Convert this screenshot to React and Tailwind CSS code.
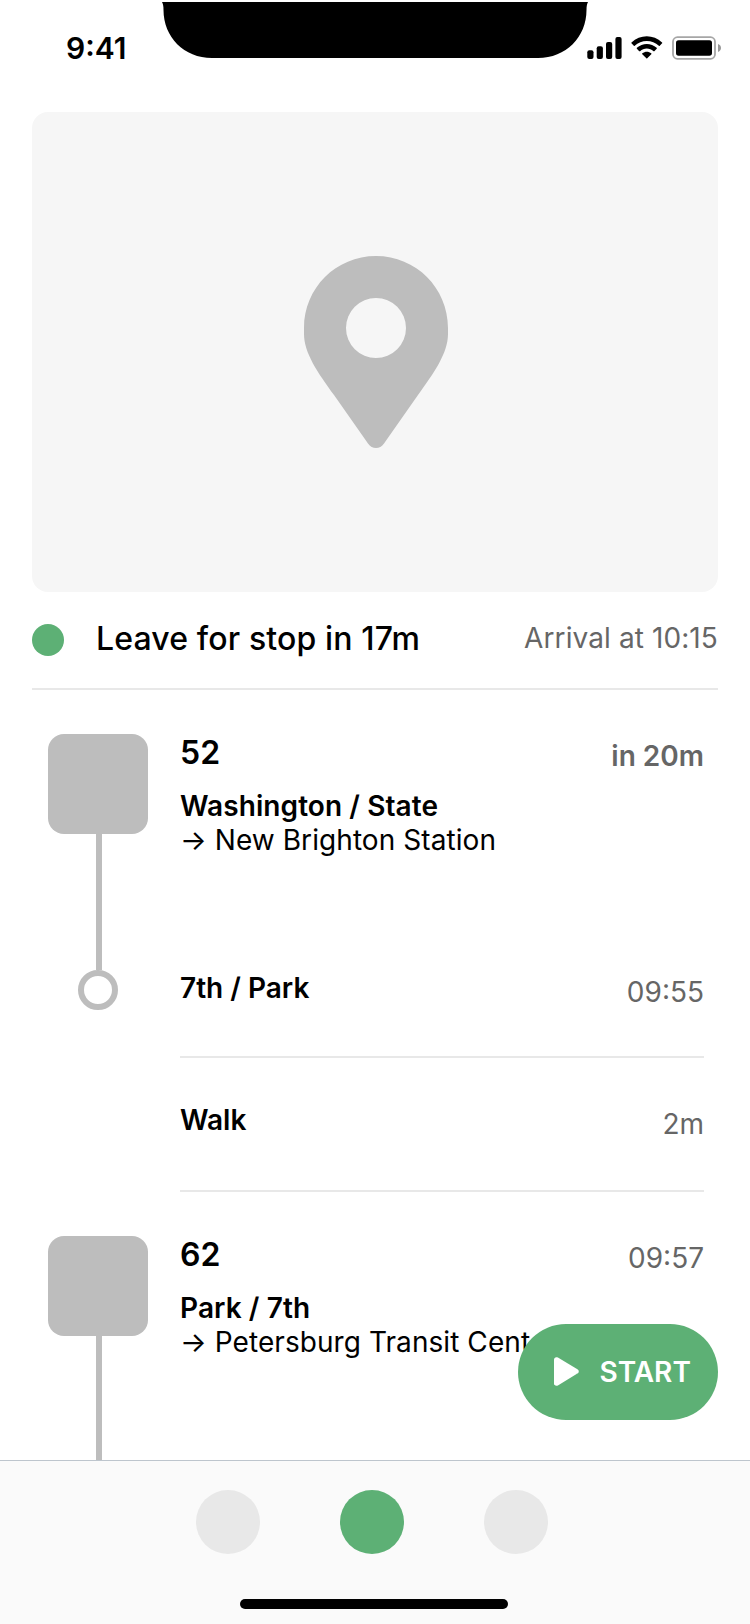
import React from "react";

function StatusBar() {
  return (
    <header className="flex h-28 items-start pt-0.5">
      <div className="mt-7 ml-[66px] w-24 shrink-0 text-[30px] leading-9 font-semibold">9:41</div>
      <div className="h-14 w-[426px] shrink-0">
        <svg className="block" width="426" height="56" viewBox="0 0 426 56">
          <path d="M0 0H426C425 2 424.5 4 424.5 8C424.5 35 404 56 376 56H50C22 56 1.500 35 1.500 8C1.500 4 1 2 0 0Z" />
        </svg>
      </div>
      <svg className="mt-[34px] -ml-px shrink-0" width="134" height="24" viewBox="0 0 134 24">
        <rect x="0.300" y="14.300" width="6.200" height="8.700" rx="2" />
        <rect x="9.700" y="10.300" width="6.200" height="12.700" rx="2" />
        <rect x="19" y="6" width="6.200" height="17" rx="2" />
        <rect x="28.400" y="1" width="6.200" height="22" rx="2" />
        <g transform="translate(44.300 0.300) scale(2.020)">
          <path d="M7.667 2.281C9.893 2.281 12.033 3.136 13.645 4.67C13.767 4.788 13.961 4.786 14.081 4.666L15.241 3.495C15.302 3.434 15.336 3.351 15.335 3.265C15.335 3.179 15.3 3.097 15.238 3.037C11.006 -1.012 4.326 -1.012 0.094 3.037C0.033 3.097 -0.002 3.179 -0.002 3.265C-0.003 3.351 0.031 3.434 0.092 3.495L1.252 4.666C1.371 4.786 1.566 4.788 1.688 4.67C3.3 3.136 5.44 2.281 7.667 2.281Z" />
          <path d="M7.667 6.09C8.89 6.09 10.07 6.544 10.977 7.365C11.1 7.482 11.293 7.479 11.413 7.359L12.571 6.189C12.632 6.127 12.666 6.044 12.665 5.957C12.664 5.871 12.629 5.788 12.567 5.728C9.805 3.16 5.53 3.16 2.769 5.728C2.706 5.788 2.671 5.871 2.67 5.957C2.669 6.044 2.703 6.127 2.765 6.189L3.922 7.359C4.042 7.479 4.235 7.482 4.358 7.365C5.264 6.545 6.443 6.09 7.667 6.09Z" />
          <path d="M9.985 8.652C9.987 8.739 9.953 8.823 9.89 8.883L7.889 10.903C7.83 10.962 7.75 10.996 7.667 10.996C7.583 10.996 7.503 10.962 7.444 10.903L5.442 8.883C5.38 8.823 5.346 8.739 5.348 8.652C5.35 8.565 5.388 8.483 5.453 8.425C6.731 7.343 8.602 7.343 9.88 8.425C9.945 8.483 9.983 8.565 9.985 8.652Z" />
        </g>
        <rect x="86" y="1.200" width="42" height="21.600" rx="4.500" fill="none" stroke="#a6a6a6" strokeWidth="1.800" />
        <rect x="89" y="4.300" width="36" height="15.400" rx="2.600" />
        <path d="M131 8C133 8.800 134 10.200 134 12C134 13.800 133 15.200 131 16Z" fill="#999" />
      </svg>
    </header>
  );
}

function MapPreview() {
  return (
    <div className="mx-8 flex h-[480px] justify-center rounded-2xl bg-[#f6f6f6] pt-36 pl-0.5">
      <svg width="144" height="192" viewBox="0 0 144 192">
        <path
          fill="#bdbdbd"
          fillRule="evenodd"
          d="M72 0C112 0 144 32 144 72V78C144 97 130 117 114 139L80 187.500C76 193.500 68 193.500 64 187.500L30 139C14 117 0 97 0 78V72C0 32 32 0 72 0ZM72 42A30 30 0 1 0 72 102A30 30 0 1 0 72 42Z"
        />
      </svg>
    </div>
  );
}

function Leg({ route, stop, destination, time, timeClass }) {
  return (
    <div className="flex h-[280px] pt-11">
      <div className="flex w-[100px] shrink-0 flex-col">
        <div className="h-[100px] rounded-2xl bg-[#bdbdbd]" />
        <div className="ml-12 w-1.5 grow bg-[#bdbdbd]" />
      </div>
      <div className="-mt-px ml-8 flex grow items-start justify-between">
        <div className="whitespace-nowrap">
          <div className="text-[32px] leading-[39px] font-semibold">{route}</div>
          <div className="mt-[17px] leading-[34px] font-semibold tracking-[0.08px]">{stop}</div>
          <div className="leading-[34px] tracking-[0.07px]">→ {destination}</div>
        </div>
        <div className={timeClass}>{time}</div>
      </div>
    </div>
  );
}

export default function App() {
  return (
    <div className="relative flex h-[1624px] w-[750px] flex-col overflow-hidden bg-white font-['Inter',sans-serif] text-[28px] leading-[34px] text-black">
      <StatusBar />
      <MapPreview />
      <div className="mx-8 flex h-[98px] shrink-0 items-start border-b-2 border-[#e8e8e8]">
        <div className="mt-8 size-8 rounded-full bg-[#5db075]" />
        <div className="mt-[27px] ml-8 grow text-[32px] leading-[39px] font-medium tracking-[0.14px]">Leave for stop in 17m</div>
        <div className="mt-[29px] tracking-[0.1px] text-[#666]">Arrival at 10:15</div>
      </div>
      <main className="h-[770px] shrink-0 overflow-hidden pr-[46px] pl-12">
        <Leg
          route="52"
          stop="Washington / State"
          destination="New Brighton Station"
          time="in 20m"
          timeClass="mt-1.5 font-semibold text-[#666]"
        />
        <div className="flex h-[88px]">
          <div className="flex w-[100px] justify-center">
            <div className="size-10 rounded-full border-[6px] border-[#bdbdbd]" />
          </div>
          <div className="ml-8 flex grow justify-between border-b-2 border-[#e8e8e8]">
            <div className="mt-px font-semibold">7th / Park</div>
            <div className="mt-[5px] text-[#666]">09:55</div>
          </div>
        </div>
        <div className="ml-[132px] flex h-[134px] justify-between border-b-2 border-[#e8e8e8] pt-[45px]">
          <div className="font-semibold">Walk</div>
          <div className="mt-1 text-[#666]">2m</div>
        </div>
        <Leg
          route="62"
          stop="Park / 7th"
          destination="Petersburg Transit Center"
          time="09:57"
          timeClass="mt-1.5 text-[#666]"
        />
      </main>
      <nav className="flex h-[164px] shrink-0 flex-col border-t border-[#bdc5cd] bg-[#fafafa]">
        <div className="mt-[29px] ml-[196px] flex gap-20">
          <div className="size-16 rounded-full bg-[#e8e8e8]" />
          <div className="size-16 rounded-full bg-[#5db075]" />
          <div className="size-16 rounded-full bg-[#e8e8e8]" />
        </div>
        <div className="mt-[45px] ml-60 h-2.5 w-[268px] rounded-full bg-black" />
      </nav>
      <button className="absolute top-[1324px] left-[518px] flex h-24 w-[200px] items-center rounded-full bg-[#5db075] pl-[35.5px] font-semibold text-white">
        <svg className="-mt-px" width="25" height="29" viewBox="0 0 25 29">
          <path
            fill="white"
            d="M0 2.600C0 0.500 2 -0.500 3.900 0.600L23.400 12.200C25.200 13.300 25.200 15.500 23.400 16.600L3.900 28.400C2 29.500 0 28.400 0 26.300Z"
          />
        </svg>
        <span className="ml-[21px]">START</span>
      </button>
    </div>
  );
}
